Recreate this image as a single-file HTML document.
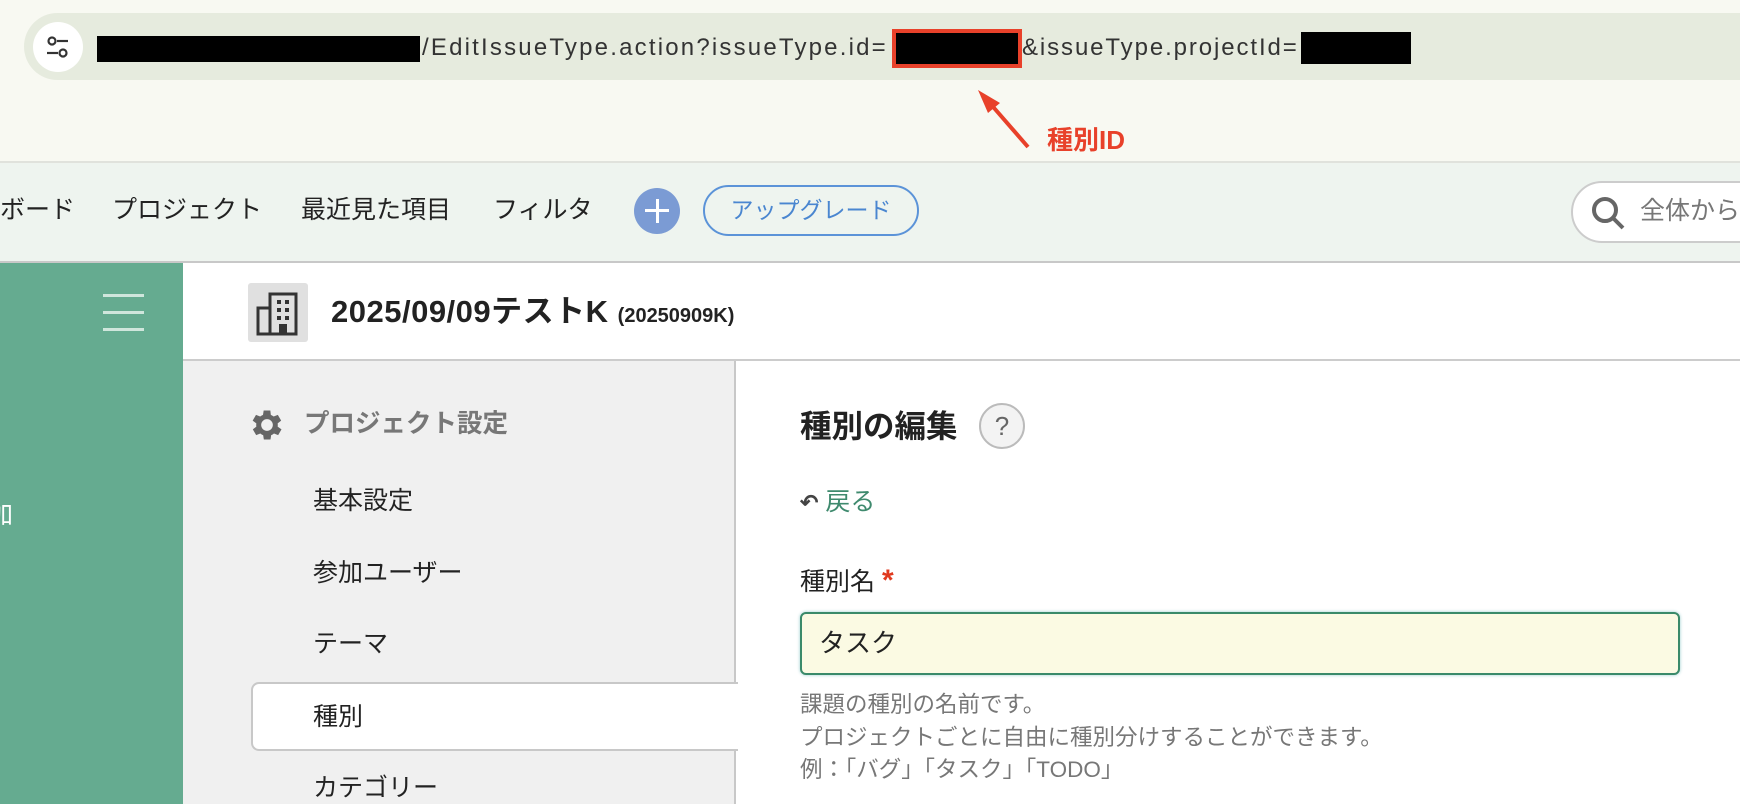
<!DOCTYPE html>
<html><head><meta charset="utf-8"><style>
*{margin:0;padding:0;box-sizing:border-box}
body{width:1740px;height:804px;overflow:hidden;position:relative;background:#fff;font-family:"Liberation Sans","Noto Sans CJK JP",sans-serif;color:#222}
.a{position:absolute;white-space:nowrap}
</style></head><body>
<div class="a" style="left:0;top:0;width:1740px;height:161px;background:#f8f9f2"></div>
<div class="a" style="left:24px;top:13px;width:1740px;height:67px;background:#e6ebde;border-radius:34px 0 0 34px"></div>
<div class="a" style="left:33px;top:22px;width:50px;height:50px;border-radius:50%;background:#fff"></div>
<svg class="a" style="left:44px;top:33px" width="28" height="28" viewBox="0 0 28 28" fill="none" stroke="#333" stroke-width="2.2"><circle cx="8" cy="8" r="3.5"/><line x1="13" y1="8" x2="24" y2="8"/><circle cx="19" cy="20" r="3.5"/><line x1="3" y1="20" x2="14" y2="20"/></svg>
<div class="a" style="left:97px;top:36px;width:323px;height:26px;background:#000"></div>
<div class="a" style="left:422px;top:33px;font-size:24px;letter-spacing:2.2px;color:#333;line-height:30px">/EditIssueType.action?issueType.id=</div>
<div class="a" style="left:892px;top:29px;width:130px;height:39px;background:#000;border:4px solid #e8412a"></div>
<div class="a" style="left:1022px;top:33px;font-size:24px;letter-spacing:1.9px;color:#333;line-height:30px">&amp;issueType.projectId=</div>
<div class="a" style="left:1301px;top:32px;width:110px;height:32px;background:#000"></div>
<svg class="a" style="left:970px;top:85px" width="70" height="70"><line x1="58" y1="62" x2="18" y2="16" stroke="#e8412a" stroke-width="4"/><polygon points="8,5 30,18 18,28" fill="#e8412a"/></svg>
<div class="a" style="left:1047px;top:125px;font-size:26px;font-weight:bold;color:#e8412a;line-height:30px">種別ID</div>
<div class="a" style="left:0;top:161px;width:1740px;height:102px;background:#eef4ef;border-top:2px solid #e0e2dc;border-bottom:2px solid #c8c8c8"></div>
<div class="a" style="left:0;top:195px;font-size:25px;line-height:30px;color:#222">ボード</div>
<div class="a" style="left:112px;top:195px;font-size:25px;line-height:30px">プロジェクト</div>
<div class="a" style="left:301px;top:195px;font-size:25px;line-height:30px">最近見た項目</div>
<div class="a" style="left:493px;top:195px;font-size:25px;line-height:30px">フィルタ</div>
<div class="a" style="left:634px;top:188px;width:46px;height:46px;border-radius:50%;background:#7b9bd4"></div>
<div class="a" style="left:645px;top:209px;width:24px;height:3px;background:#fff"></div>
<div class="a" style="left:655.5px;top:199px;width:3px;height:24px;background:#fff"></div>
<div class="a" style="left:703px;top:185px;width:216px;height:51px;border:2px solid #5b93d8;border-radius:26px;color:#4a86d0;font-size:23px;text-align:center;line-height:47px">アップグレード</div>
<div class="a" style="left:1571px;top:181px;width:200px;height:62px;border:2px solid #ccc;border-radius:31px;background:#fff"></div>
<svg class="a" style="left:1590px;top:195px" width="36" height="36" fill="none" stroke="#666" stroke-width="4"><circle cx="15" cy="15" r="11"/><line x1="23" y1="23" x2="33" y2="33"/></svg>
<div class="a" style="left:1640px;top:196px;font-size:25px;line-height:30px;color:#777">全体から</div>
<div class="a" style="left:0;top:263px;width:183px;height:541px;background:#65ab90"></div>
<div class="a" style="left:103px;top:294px;width:41px;height:3px;background:#cfe6dc"></div>
<div class="a" style="left:103px;top:311px;width:41px;height:3px;background:#cfe6dc"></div>
<div class="a" style="left:103px;top:328px;width:41px;height:3px;background:#cfe6dc"></div>
<div class="a" style="left:-12px;top:500px;font-size:25px;color:#fff;line-height:30px">加</div>
<div class="a" style="left:248px;top:283px;width:60px;height:59px;background:#e0e0e0;border-radius:3px"></div>
<svg class="a" style="left:256px;top:290px" width="44" height="46" fill="none" stroke="#333" stroke-width="3"><rect x="2" y="18" width="12" height="26"/><rect x="14" y="4" width="26" height="40"/><g fill="#333" stroke="none"><rect x="21" y="10" width="4" height="4"/><rect x="29" y="10" width="4" height="4"/><rect x="21" y="18" width="4" height="4"/><rect x="29" y="18" width="4" height="4"/><rect x="21" y="26" width="4" height="4"/><rect x="29" y="26" width="4" height="4"/><rect x="23" y="34" width="8" height="10"/></g></svg>
<div class="a" style="left:331px;top:294px;font-size:31px;font-weight:bold;line-height:36px;letter-spacing:0.5px">2025/09/09テストK <span style="font-size:20px;letter-spacing:0">(20250909K)</span></div>
<div class="a" style="left:183px;top:359px;width:1557px;height:2px;background:#ccc"></div>
<div class="a" style="left:183px;top:361px;width:553px;height:443px;background:#f0f0f0;border-right:2px solid #c8c8c8"></div>
<svg class="a" style="left:247px;top:405px" width="40" height="40" viewBox="0 0 24 24"><path fill="#666" d="M19.4 13a7.5 7.5 0 000-2l2.1-1.6-2-3.5-2.5 1a7.6 7.6 0 00-1.7-1L15 3.3h-4l-.4 2.6a7.6 7.6 0 00-1.7 1l-2.5-1-2 3.5L6.6 11a7.5 7.5 0 000 2l-2.1 1.6 2 3.5 2.5-1c.5.4 1.1.8 1.7 1l.4 2.6h4l.4-2.6c.6-.2 1.2-.6 1.7-1l2.5 1 2-3.5zM13 15.5a3.5 3.5 0 110-7 3.5 3.5 0 010 7z" transform="translate(-1 0)"/></svg>
<div class="a" style="left:304px;top:409px;font-size:25.5px;font-weight:bold;color:#777;line-height:30px">プロジェクト設定</div>
<div class="a" style="left:313px;top:486px;font-size:25px;line-height:30px">基本設定</div>
<div class="a" style="left:313px;top:558px;font-size:25px;line-height:30px">参加ユーザー</div>
<div class="a" style="left:313px;top:629px;font-size:25px;line-height:30px">テーマ</div>
<div class="a" style="left:251px;top:682px;width:487px;height:69px;background:#fff;border:2px solid #c8c8c8;border-right:none;border-radius:8px 0 0 8px"></div>
<div class="a" style="left:313px;top:702px;font-size:25px;line-height:30px">種別</div>
<div class="a" style="left:313px;top:773px;font-size:25px;line-height:30px">カテゴリー</div>
<div class="a" style="left:800px;top:409px;font-size:31.5px;font-weight:bold;line-height:34px">種別の編集</div>
<div class="a" style="left:979px;top:403px;width:46px;height:46px;border-radius:50%;border:2px solid #bbb;background:#f3f3f3;text-align:center;font-size:26px;line-height:42px;color:#666">?</div>
<div class="a" style="left:800px;top:487px;font-size:25px;line-height:30px;color:#3f8a6e"><span style="color:#444;font-weight:bold;font-size:22px">↶</span> 戻る</div>
<div class="a" style="left:800px;top:566px;font-size:25px;line-height:30px">種別名 <span style="color:#e03a1f;font-weight:bold;font-size:30px">*</span></div>
<div class="a" style="left:800px;top:612px;width:880px;height:63px;background:#fbfae3;border:2px solid #3a8a6a;border-radius:6px;box-shadow:0 0 3px #9cc"></div>
<div class="a" style="left:819px;top:628px;font-size:26px;line-height:30px">タスク</div>
<div class="a" style="left:800px;top:689px;font-size:22.5px;line-height:32.5px;color:#777">課題の種別の名前です。<br>プロジェクトごとに自由に種別分けすることができます。<br>例：「バグ」「タスク」「TODO」</div>
</body></html>
